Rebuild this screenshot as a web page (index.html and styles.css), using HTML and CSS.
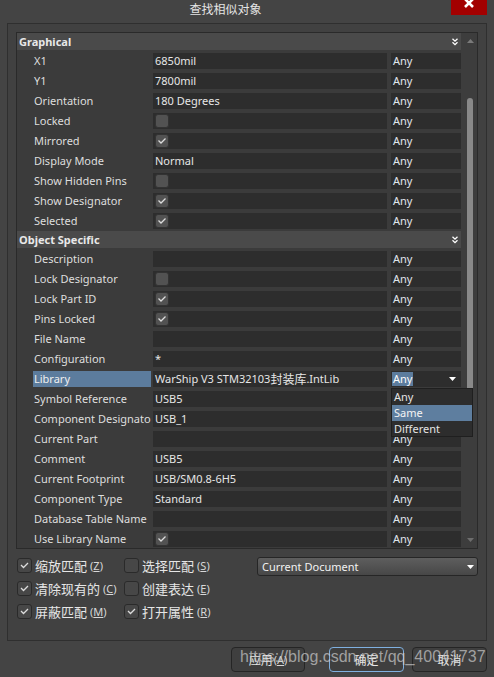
FILE: index.html
```html
<!DOCTYPE html>
<html lang="zh">
<head>
<meta charset="utf-8">
<title>查找相似对象</title>
<link rel="stylesheet" href="styles.css">
</head>
<body>
<div class="win">
  <div class="titlebar">
    <div class="title">查找相似对象</div>
    <div class="close"><svg width="36" height="15" viewBox="0 0 36 15"><path d="M14 -1 L22 7 M22 -1 L14 7" stroke="#fff" stroke-width="2.6" fill="none"/></svg></div>
  </div>

  <div class="panel">
    <div class="grid">
      <div class="gridbody">
        <div class="sect"><span>Graphical</span><svg class="chev" width="6" height="8" viewBox="0 0 6 8"><path d="M0.5 0.8 L3 3.2 L5.5 0.8 M0.5 4.3 L3 6.7 L5.5 4.3" stroke="#fff" stroke-width="1.3" fill="none"/></svg></div>
        <div class="row"><div class="lbl">X1</div><div class="val">6850mil</div><div class="any">Any</div></div>
        <div class="row"><div class="lbl">Y1</div><div class="val">7800mil</div><div class="any">Any</div></div>
        <div class="row"><div class="lbl">Orientation</div><div class="val">180 Degrees</div><div class="any">Any</div></div>
        <div class="row"><div class="lbl">Locked</div><div class="val"><span class="cb"></span></div><div class="any">Any</div></div>
        <div class="row"><div class="lbl">Mirrored</div><div class="val"><span class="cb"><svg viewBox="0 0 14 14" width="14" height="14"><path d="M3.5 6.5 L6 9 L10.5 4.5" stroke="#dcdcdc" stroke-width="1.3" fill="none"/></svg></span></div><div class="any">Any</div></div>
        <div class="row"><div class="lbl">Display Mode</div><div class="val">Normal</div><div class="any">Any</div></div>
        <div class="row"><div class="lbl">Show Hidden Pins</div><div class="val"><span class="cb"></span></div><div class="any">Any</div></div>
        <div class="row"><div class="lbl">Show Designator</div><div class="val"><span class="cb"><svg viewBox="0 0 14 14" width="14" height="14"><path d="M3.5 6.5 L6 9 L10.5 4.5" stroke="#dcdcdc" stroke-width="1.3" fill="none"/></svg></span></div><div class="any">Any</div></div>
        <div class="row"><div class="lbl">Selected</div><div class="val"><span class="cb"><svg viewBox="0 0 14 14" width="14" height="14"><path d="M3.5 6.5 L6 9 L10.5 4.5" stroke="#dcdcdc" stroke-width="1.3" fill="none"/></svg></span></div><div class="any">Any</div></div>

        <div class="sect"><span>Object Specific</span><svg class="chev" width="6" height="8" viewBox="0 0 6 8"><path d="M0.5 0.8 L3 3.2 L5.5 0.8 M0.5 4.3 L3 6.7 L5.5 4.3" stroke="#fff" stroke-width="1.3" fill="none"/></svg></div>
        <div class="row"><div class="lbl">Description</div><div class="val"></div><div class="any">Any</div></div>
        <div class="row"><div class="lbl">Lock Designator</div><div class="val"><span class="cb"></span></div><div class="any">Any</div></div>
        <div class="row"><div class="lbl">Lock Part ID</div><div class="val"><span class="cb"><svg viewBox="0 0 14 14" width="14" height="14"><path d="M3.5 6.5 L6 9 L10.5 4.5" stroke="#dcdcdc" stroke-width="1.3" fill="none"/></svg></span></div><div class="any">Any</div></div>
        <div class="row"><div class="lbl">Pins Locked</div><div class="val"><span class="cb"><svg viewBox="0 0 14 14" width="14" height="14"><path d="M3.5 6.5 L6 9 L10.5 4.5" stroke="#dcdcdc" stroke-width="1.3" fill="none"/></svg></span></div><div class="any">Any</div></div>
        <div class="row"><div class="lbl">File Name</div><div class="val"></div><div class="any">Any</div></div>
        <div class="row"><div class="lbl">Configuration</div><div class="val">*</div><div class="any">Any</div></div>
        <div class="row"><div class="lbl sel">Library</div><div class="val">WarShip V3 STM32103<span class="cjk">封装库</span>.IntLib</div>
          <div class="any combo"><span class="hl">Any</span><svg class="tri" width="7" height="4" viewBox="0 0 7 4"><path d="M0 0 H7 L3.5 4 Z" fill="#fff"/></svg>
            <div class="popup">
              <div class="opt">Any</div>
              <div class="opt on">Same</div>
              <div class="opt">Different</div>
            </div>
          </div>
        </div>
        <div class="row"><div class="lbl">Symbol Reference</div><div class="val">USB5</div><div class="any">Any</div></div>
        <div class="row"><div class="lbl">Component Designator</div><div class="val">USB_1</div><div class="any">Any</div></div>
        <div class="row"><div class="lbl">Current Part</div><div class="val"></div><div class="any">Any</div></div>
        <div class="row"><div class="lbl">Comment</div><div class="val">USB5</div><div class="any">Any</div></div>
        <div class="row"><div class="lbl">Current Footprint</div><div class="val">USB/SM0.8-6H5</div><div class="any">Any</div></div>
        <div class="row"><div class="lbl">Component Type</div><div class="val">Standard</div><div class="any">Any</div></div>
        <div class="row"><div class="lbl">Database Table Name</div><div class="val"></div><div class="any">Any</div></div>
        <div class="row"><div class="lbl">Use Library Name</div><div class="val"><span class="cb"><svg viewBox="0 0 14 14" width="14" height="14"><path d="M3.5 6.5 L6 9 L10.5 4.5" stroke="#dcdcdc" stroke-width="1.3" fill="none"/></svg></span></div><div class="any">Any</div></div>
      </div>
      <div class="sbar">
        <div class="sb-btn"><svg width="7" height="4" viewBox="0 0 7 4"><path d="M3.5 0 L7 4 H0 Z" fill="#7a7a7a"/></svg></div>
        <div class="sb-track"><div class="thumb"></div></div>
        <div class="sb-btn down"><svg width="7" height="4" viewBox="0 0 7 4"><path d="M0 0 H7 L3.5 4 Z" fill="#6e6e6e"/></svg></div>
      </div>
    </div>

    <div class="opts">
      <div class="checks">
        <label class="chk"><span class="box"><svg viewBox="0 0 15 15" width="15" height="15"><path d="M4 7 L6.5 9.5 L11 5" stroke="#dcdcdc" stroke-width="1.3" fill="none"/></svg></span><span class="zh">缩放匹配</span><span class="key">(<u>Z</u>)</span></label>
        <label class="chk"><span class="box"></span><span class="zh">选择匹配</span><span class="key">(<u>S</u>)</span></label>
        <label class="chk"><span class="box"><svg viewBox="0 0 15 15" width="15" height="15"><path d="M4 7 L6.5 9.5 L11 5" stroke="#dcdcdc" stroke-width="1.3" fill="none"/></svg></span><span class="zh">清除现有的</span><span class="key">(<u>C</u>)</span></label>
        <label class="chk"><span class="box"></span><span class="zh">创建表达</span><span class="key">(<u>E</u>)</span></label>
        <label class="chk"><span class="box"><svg viewBox="0 0 15 15" width="15" height="15"><path d="M4 7 L6.5 9.5 L11 5" stroke="#dcdcdc" stroke-width="1.3" fill="none"/></svg></span><span class="zh">屏蔽匹配</span><span class="key">(<u>M</u>)</span></label>
        <label class="chk"><span class="box"><svg viewBox="0 0 15 15" width="15" height="15"><path d="M4 7 L6.5 9.5 L11 5" stroke="#dcdcdc" stroke-width="1.3" fill="none"/></svg></span><span class="zh">打开属性</span><span class="key">(<u>R</u>)</span></label>
      </div>
      <div class="scope"><span>Current Document</span><svg width="7" height="4" viewBox="0 0 7 4"><path d="M0 0 H7 L3.5 4 Z" fill="#fff"/></svg></div>
    </div>
  </div>

  <div class="buttons">
    <div class="btn b1"><span class="zh">应用</span><span class="key">(<u>A</u>)</span></div>
    <div class="btn b2 focus"><span class="zh">确定</span></div>
    <div class="btn b3"><span class="zh">取消</span></div>
  </div>

  <div class="watermark">https://blog.csdn.net/qq_40041737</div>
</div>
</body>
</html>
```

FILE: styles.css
```css
* { box-sizing: border-box; }
html, body { margin: 0; padding: 0; }
body {
  background: #424242;
  width: 494px;
  height: 677px;
  overflow: hidden;
  font-family: "Noto Sans", "Noto Sans CJK SC", sans-serif;
  font-size: 11px;
  color: #e2e2e2;
}
.win {
  position: relative;
  width: 494px;
  height: 677px;
  background: #444444;
}

/* title bar */
.titlebar {
  display: flex;
  height: 23px;
}
.title {
  flex: 0 0 451px;
  text-align: center;
  font-family: "Noto Sans CJK SC", sans-serif;
  font-size: 12px;
  line-height: 17px;
  color: #e4e4e4;
}
.close {
  width: 36px;
  height: 15px;
  background: #a30000;
}
.close svg { display: block; }

/* group panel */
.panel {
  margin-left: 7px;
  width: 480px;
  height: 618px;
  border: 1px solid #2f2f2f;
  background: #414141;
  padding: 8px 8px 0 8px;
}
.grid {
  display: flex;
  height: 517px;
  border: 1px solid #2a2a2a;
  background: #3b3b3b;
  overflow: hidden;
}
.gridbody {
  width: 444px;
  flex: 0 0 444px;
}
.sect {
  display: flex;
  align-items: center;
  justify-content: space-between;
  height: 17px;
  margin-bottom: 1px;
  background: #4a4a4a;
  padding: 0 2px 0 2px;
  font-weight: bold;
  color: #e8e8e8;
  line-height: 17px;
}
.chev { display: block; margin-right: 1px; }
.row {
  display: flex;
  align-items: center;
  height: 20px;
  padding-left: 16px;
}
.lbl {
  width: 118px;
  height: 16px;
  line-height: 16px;
  padding-left: 1px;
  white-space: nowrap;
  overflow: hidden;
  color: #dedede;
}
.lbl.sel { background: #5c7c9d; color: #f0f0f0; }
.val {
  width: 234px;
  height: 16px;
  margin-left: 2px;
  background: #2d2d2d;
  line-height: 16px;
  padding-left: 2px;
  white-space: nowrap;
  overflow: hidden;
  color: #e6e6e6;
  display: flex;
  align-items: center;
}
.cjk { font-family: "Noto Sans CJK SC", sans-serif; font-size: 12px; }
.any {
  position: relative;
  width: 70px;
  height: 16px;
  margin-left: 4px;
  background: #2d2d2d;
  line-height: 16px;
  padding-left: 2px;
  color: #e0e6ee;
}
.combo {
  display: flex;
  align-items: center;
  justify-content: space-between;
  padding-right: 5px;
  padding-left: 1px;
  overflow: visible;
}
.hl {
  background: #5c7c9d;
  color: #fff;
  height: 14px;
  line-height: 14px;
  padding: 0 1px;
}
.tri { display: block; }
.popup {
  position: absolute;
  left: 0;
  top: 17px;
  width: 82px;
  height: 49px;
  background: #2d2d2d;
  border: 1px solid #1f1f1f;
  z-index: 5;
}
.opt {
  height: 16px;
  line-height: 16px;
  padding-left: 2px;
  color: #e4e4e4;
}
.opt.on { background: #5e7e9f; color: #f4f4f4; }

.cb {
  display: block;
  width: 14px;
  height: 14px;
  border-radius: 3px;
  background: #525252;
  border: 1px solid #333;
}
.cb svg { display: block; margin: -1px 0 0 -1px; }

/* scrollbar */
.sbar {
  flex: 0 0 16px;
  display: flex;
  flex-direction: column;
  background: #3d3d3d;
}
.sb-btn {
  height: 16px;
  display: flex;
  justify-content: flex-start;
  padding-left: 6px;
  align-items: flex-start;
  padding-top: 6px;
}
.sb-btn svg { display: block; }
.sb-track {
  flex: 1;
  padding-top: 49px;
  padding-left: 6px;
}
.thumb {
  width: 6px;
  height: 330px;
  background: #898989;
  border-radius: 3px 3px 0 0;
}

/* options */
.opts {
  display: flex;
  justify-content: space-between;
  align-items: flex-start;
  padding-top: 9px;
  padding-left: 1px;
}
.checks {
  display: grid;
  grid-template-columns: 107px auto;
  row-gap: 8px;
}
.chk {
  display: flex;
  align-items: center;
  height: 15px;
  white-space: nowrap;
}
.box {
  display: block;
  width: 15px;
  height: 15px;
  border: 1px solid #2a2a2a;
  border-radius: 3px;
  background: #474747;
  margin-right: 3px;
  flex: 0 0 15px;
}
.box svg { display: block; margin: -1px 0 0 -1px; }
.zh {
  font-family: "Noto Sans CJK SC", sans-serif;
  font-size: 13px;
  color: #e6e6e6;
}
.key {
  font-size: 11px;
  margin-left: 3px;
  color: #d8d8d8;
}
.key u { text-decoration-thickness: 1px; text-underline-offset: 1px; }
.scope {
  width: 221px;
  height: 19px;
  margin-top: -1px;
  border: 1px solid #262626;
  border-radius: 3px;
  background: linear-gradient(#5e5e5e, #474747);
  display: flex;
  align-items: center;
  justify-content: space-between;
  padding: 0 3px 0 4px;
  color: #f2f2f2;
}
.scope svg { display: block; }

/* buttons */
.buttons {
  display: flex;
  justify-content: flex-end;
  padding: 6px 7px 0 0;
}
.btn {
  height: 25px;
  border: 1px solid #252525;
  border-radius: 4px;
  background: #3f3f3f;
  display: flex;
  align-items: center;
  justify-content: center;
  color: #e6e6e6;
}
.btn .zh { font-size: 12px; }
.btn .key { margin-left: 1px; }
.b1 { width: 74px; }
.b2 { width: 75px; margin-left: 24px; }
.b3 { width: 75px; margin-left: 8px; }
.btn.focus { border-color: #7fb0e0; }

.watermark {
  position: absolute;
  left: 240px;
  top: 647px;
  font-family: "Liberation Sans", sans-serif;
  font-size: 16px;
  line-height: 20px;
  color: rgba(205, 205, 205, 0.7);
  white-space: nowrap;
  pointer-events: none;
}
```
